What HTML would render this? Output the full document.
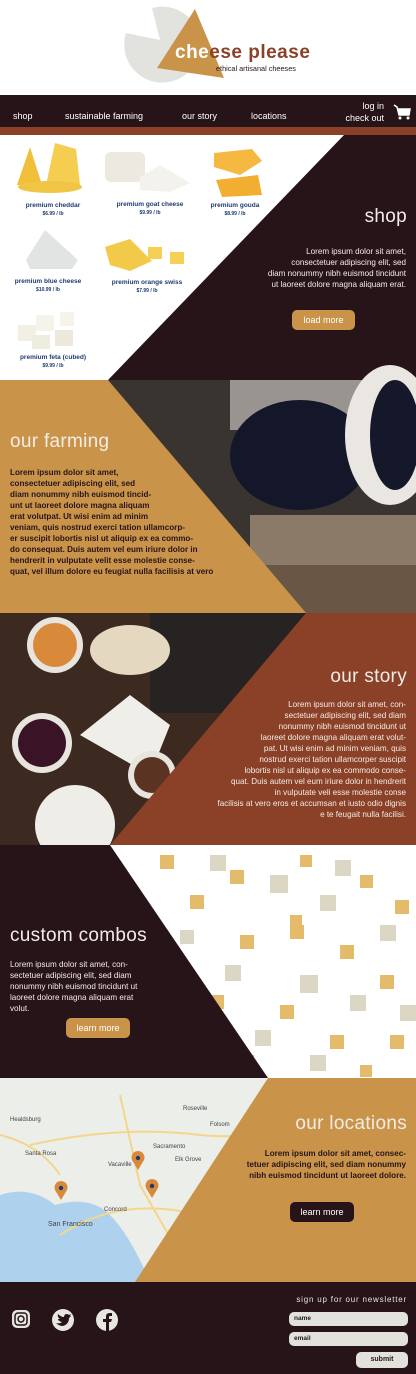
<!DOCTYPE html>
<html><head><meta charset="utf-8"><style>
*{margin:0;padding:0;box-sizing:border-box}
body{width:416px;height:1374px;position:relative;overflow:hidden;background:#fff;font-family:"Liberation Sans",sans-serif}
.a{position:absolute}
.t{position:absolute;font-size:8.1px;line-height:11px;font-weight:bold;white-space:nowrap}
.h{position:absolute;font-size:19px;font-weight:300;color:#f3ece6;letter-spacing:.3px}
.p{position:absolute;text-align:center;color:#1f3a73;font-size:6.5px;font-weight:bold;line-height:8px}
.p small{display:block;font-size:5px}
.btn{position:absolute;border-radius:5px;font-size:9px;text-align:center;line-height:20px}
</style></head><body>
<svg class="a" style="left:0;top:0" width="416" height="95">
<path d="M160 40 L126 33 A38 38 0 1 0 152 8 Z" fill="#e2e3de"/>
<polygon points="195,9 157,68 224,78" fill="#c9944a"/>
<text x="175" y="58" font-family="Liberation Sans" font-weight="bold" font-size="19" fill="#8a4128" letter-spacing=".5"><tspan fill="#fff">che</tspan>ese please</text>
<text x="216" y="71" font-family="Liberation Sans" font-size="7.3" fill="#261419">ethical artisanal cheeses</text>
</svg>
<div class="a" style="left:0;top:95px;width:416px;height:33px;background:#261419"></div>
<div class="a" style="left:0;top:127px;width:416px;height:8px;background:#8a4128"></div>
<div class="a" style="left:13px;top:111px;color:#fff;font-size:9px">shop</div>
<div class="a" style="left:65px;top:111px;color:#fff;font-size:9px">sustainable farming</div>
<div class="a" style="left:182px;top:111px;color:#fff;font-size:9px">our story</div>
<div class="a" style="left:251px;top:111px;color:#fff;font-size:9px">locations</div>
<div class="a" style="left:330px;top:100px;width:54px;text-align:right;color:#fff;font-size:9px;line-height:12px">log in<br>check out</div>
<svg class="a" style="left:393px;top:104px" width="18" height="18"><path d="M1 1 L4 3 L6 11 L16 11 L17 5 L5 5" fill="#fff" stroke="#fff" stroke-width="1.5"/><circle cx="7" cy="14" r="1.5" fill="#fff"/><circle cx="15" cy="14" r="1.5" fill="#fff"/></svg>
<svg class="a" style="left:0;top:135px" width="416" height="1147">
<polygon points="344,0 416,0 416,245 108,245" fill="#261419"/>
<rect x="0" y="245" width="416" height="233" fill="#3a3430"/>
<rect x="230" y="245" width="186" height="50" fill="#9a9490"/>
<ellipse cx="300" cy="320" rx="70" ry="55" fill="#14172a"/>
<ellipse cx="390" cy="300" rx="45" ry="70" fill="#eae6e2"/>
<ellipse cx="395" cy="300" rx="25" ry="55" fill="#15182a"/>
<rect x="250" y="380" width="166" height="60" fill="#8c7a68"/>
<rect x="260" y="430" width="156" height="48" fill="#6a5644"/>
<polygon points="0,245 108,245 306,478 0,478" fill="#c9944a"/>
<rect x="0" y="478" width="416" height="232" fill="#3c2a20"/>
<rect x="150" y="478" width="200" height="100" fill="#262322"/>
<circle cx="55" cy="510" r="28" fill="#e8e4de"/><circle cx="55" cy="510" r="22" fill="#d9893a"/>
<circle cx="42" cy="608" r="30" fill="#e8e4de"/><circle cx="42" cy="608" r="24" fill="#3a1426"/>
<polygon points="80,600 130,560 170,590 150,640" fill="#efeee8"/>
<circle cx="75" cy="690" r="40" fill="#efede8"/>
<circle cx="152" cy="640" r="24" fill="#e8e4de"/><circle cx="152" cy="640" r="18" fill="#5b3322"/>
<ellipse cx="130" cy="515" rx="40" ry="25" fill="#e4d8c0"/>
<polygon points="306,478 416,478 416,710 110,710" fill="#8a4128"/>
<rect x="0" y="710" width="416" height="233" fill="#fff"/>
<g fill="#e4bb6a">
<rect x="160" y="720" width="14" height="14"/><rect x="190" y="760" width="14" height="14"/><rect x="230" y="735" width="14" height="14"/><rect x="300" y="720" width="12" height="12"/><rect x="360" y="740" width="13" height="13"/><rect x="395" y="765" width="14" height="14"/><rect x="240" y="800" width="14" height="14"/><rect x="290" y="790" width="14" height="14"/><rect x="340" y="810" width="14" height="14"/><rect x="380" y="840" width="14" height="14"/><rect x="210" y="860" width="14" height="14"/><rect x="280" y="870" width="14" height="14"/><rect x="330" y="900" width="14" height="14"/><rect x="390" y="900" width="14" height="14"/><rect x="240" y="920" width="14" height="14"/><rect x="360" y="930" width="12" height="12"/><rect x="290" y="780" width="12" height="12"/>
</g>
<g fill="#dcd6c4">
<rect x="210" y="720" width="16" height="16"/><rect x="270" y="740" width="18" height="18"/><rect x="320" y="760" width="16" height="16"/><rect x="380" y="790" width="16" height="16"/><rect x="225" y="830" width="16" height="16"/><rect x="300" y="840" width="18" height="18"/><rect x="350" y="860" width="16" height="16"/><rect x="255" y="895" width="16" height="16"/><rect x="400" y="870" width="16" height="16"/><rect x="310" y="920" width="16" height="16"/><rect x="335" y="725" width="16" height="16"/><rect x="180" y="795" width="14" height="14"/>
</g>
<polygon points="0,710 110,710 268,943 0,943" fill="#261419"/>
<rect x="0" y="943" width="416" height="204" fill="#eceeea"/>
<path d="M0 1060 Q30 1050 55 1070 Q90 1060 110 1080 Q130 1100 150 1147 L0 1147 Z" fill="#aed1ee"/>
<path d="M0 1000 Q40 1010 60 1040" stroke="#f3d68c" stroke-width="2" fill="none"/>
<path d="M30 1010 Q120 990 200 1000 Q250 1005 290 990" stroke="#f3d68c" stroke-width="2" fill="none"/>
<path d="M120 960 L140 1050 L180 1120" stroke="#f3d68c" stroke-width="2" fill="none"/>
<path d="M60 1100 Q120 1060 200 1080" stroke="#f3d68c" stroke-width="2" fill="none"/>
<polygon points="268,943 416,943 416,1147 135,1147" fill="#c9944a"/>
</svg>
<svg class="a" style="left:0;top:1078px" width="270" height="204">
<g font-family="Liberation Sans" font-size="6" fill="#444"><text x="183" y="32">Roseville</text><text x="153" y="70">Sacramento</text><text x="10" y="43">Healdsburg</text><text x="25" y="77">Santa Rosa</text><text x="108" y="88">Vacaville</text><text x="175" y="83">Elk Grove</text><text x="104" y="133">Concord</text><text x="48" y="148" font-size="7">San Francisco</text><text x="210" y="48">Folsom</text></g>
<g fill="#d9893a"><path d="M138 92 L132 82 A6.5 6.5 0 1 1 144 82 Z"/><path d="M61 122 L55 112 A6.5 6.5 0 1 1 67 112 Z"/><path d="M152 120 L146 110 A6.5 6.5 0 1 1 158 110 Z"/></g>
<g fill="#1f3a73"><circle cx="138" cy="80" r="2.2"/><circle cx="61" cy="110" r="2.2"/><circle cx="152" cy="108" r="2.2"/></g>
</svg>
<svg class="a" style="left:0;top:135px" width="290" height="240">
<polygon points="17,50 30,12 42,50" fill="#f1c03b"/><polygon points="46,50 55,8 76,14 80,50" fill="#f5cd50"/><ellipse cx="50" cy="52" rx="32" ry="6" fill="#f0c545"/>
<rect x="105" y="17" width="40" height="30" rx="6" fill="#ece9e0"/><polygon points="140,42 160,30 190,48 170,57 140,55" fill="#f4f2ec"/>
<polygon points="214,18 252,14 262,26 240,40 214,32" fill="#f5b840"/><polygon points="216,45 258,40 262,60 222,62" fill="#f2ae30"/>
<polygon points="26,125 45,95 78,125 72,134 30,134" fill="#e0e4e2"/>
<polygon points="105,112 130,104 152,126 130,136 110,130" fill="#f3c94a"/><rect x="148" y="112" width="14" height="12" fill="#f6cf55"/><rect x="170" y="117" width="14" height="12" fill="#f6cf55"/>
<rect x="18" y="190" width="18" height="16" fill="#f2efe4"/><rect x="36" y="180" width="18" height="16" fill="#f6f4ea"/><rect x="55" y="195" width="18" height="16" fill="#ecE8dc"/><rect x="60" y="177" width="14" height="14" fill="#f6f4ea"/><rect x="32" y="200" width="18" height="14" fill="#efece0"/>
</svg>
<div class="p" style="left:8px;top:202px;width:90px">premium cheddar<small>$6.99 / lb</small></div>
<div class="p" style="left:105px;top:201px;width:90px">premium goat cheese<small>$9.99 / lb</small></div>
<div class="p" style="left:195px;top:202px;width:80px">premium gouda<small>$8.99 / lb</small></div>
<div class="p" style="left:4px;top:278px;width:88px">premium blue cheese<small>$10.99 / lb</small></div>
<div class="p" style="left:102px;top:279px;width:90px">premium orange swiss<small>$7.99 / lb</small></div>
<div class="p" style="left:8px;top:354px;width:90px">premium feta (cubed)<small>$9.99 / lb</small></div>
<div class="h" style="right:9px;top:206px">shop</div>
<div class="t" style="right:10px;top:246px;text-align:right;color:#f3ece6;font-weight:normal">Lorem ipsum dolor sit amet,<br>consectetuer adipiscing elit, sed<br>diam nonummy nibh euismod tincidunt<br>ut laoreet dolore magna aliquam erat.</div>
<div class="btn" style="left:292px;top:310px;width:63px;background:#c9944a;color:#fff">load more</div>
<div class="h" style="left:10px;top:431px">our farming</div>
<div class="t" style="left:10px;top:467px;color:#261419">Lorem ipsum dolor sit amet,<br>consectetuer adipiscing elit, sed<br>diam nonummy nibh euismod tincid-<br>unt ut laoreet dolore magna aliquam<br>erat volutpat. Ut wisi enim ad minim<br>veniam, quis nostrud exerci tation ullamcorp-<br>er suscipit lobortis nisl ut aliquip ex ea commo-<br>do consequat. Duis autem vel eum iriure dolor in<br>hendrerit in vulputate velit esse molestie conse-<br>quat, vel illum dolore eu feugiat nulla facilisis at vero</div>
<div class="h" style="right:9px;top:666px">our story</div>
<div class="t" style="right:10px;top:699px;text-align:right;color:#f3ece6;font-weight:normal">Lorem ipsum dolor sit amet, con-<br>sectetuer adipiscing elit, sed diam<br>nonummy nibh euismod tincidunt ut<br>laoreet dolore magna aliquam erat volut-<br>pat. Ut wisi enim ad minim veniam, quis<br>nostrud exerci tation ullamcorper suscipit<br>lobortis nisl ut aliquip ex ea commodo conse-<br>quat. Duis autem vel eum iriure dolor in hendrerit<br>in vulputate veli esse molestie conse<br>facilisis at vero eros et accumsan et iusto odio dignis<br>e te feugait nulla facilisi.</div>
<div class="h" style="left:10px;top:925px">custom combos</div>
<div class="t" style="left:10px;top:959px;color:#f3ece6;font-weight:normal">Lorem ipsum dolor sit amet, con-<br>sectetuer adipiscing elit, sed diam<br>nonummy nibh euismod tincidunt ut<br>laoreet dolore magna aliquam erat<br>volut.</div>
<div class="btn" style="left:66px;top:1018px;width:64px;background:#c9944a;color:#fff">learn more</div>
<div class="h" style="right:9px;top:1113px">our locations</div>
<div class="t" style="right:10px;top:1148px;text-align:right;color:#261419">Lorem ipsum dolor sit amet, consec-<br>tetuer adipiscing elit, sed diam nonummy<br>nibh euismod tincidunt ut laoreet dolore.</div>
<div class="btn" style="left:290px;top:1202px;width:64px;background:#261419;color:#fff">learn more</div>
<div class="a" style="left:0;top:1282px;width:416px;height:92px;background:#261419"></div>
<svg class="a" style="left:10px;top:1308px" width="112" height="24">
<rect x="2" y="2" width="18" height="18" rx="5" fill="#e8e6e0"/><rect x="5" y="5" width="12" height="12" rx="3" fill="none" stroke="#261419" stroke-width="1.5"/><circle cx="11" cy="11" r="3" fill="none" stroke="#261419" stroke-width="1.5"/>
<circle cx="53" cy="12" r="11" fill="#e8e6e0"/><path d="M46 15 Q50 16 52 14 Q48 13 48 11 Q49 11 50 11 Q47 9 48 6 Q51 9 54 9 Q54 6 57 6 Q58 6 59 7 L61 6 L60 8 L61 8 Q60 9 59 10 Q59 16 53 18 Q49 18 46 15Z" fill="#261419"/>
<circle cx="97" cy="12" r="11" fill="#e8e6e0"/><path d="M96 23 L96 14 L93 14 L93 11 L96 11 L96 8 Q96 5 100 5 L102 5 L102 8 L100 8 Q99 8 99 9 L99 11 L102 11 L101 14 L99 14 L99 23Z" fill="#261419"/>
</svg>
<div class="a" style="right:9px;top:1295px;color:#e8e6e0;font-size:8px;letter-spacing:.8px">sign up for our newsletter</div>
<div class="a" style="left:289px;top:1312px;width:119px;height:14px;border-radius:5px;background:#e2e2dc;font-size:6.5px;font-weight:bold;color:#261419;padding:3px 0 0 5px">name</div>
<div class="a" style="left:289px;top:1332px;width:119px;height:14px;border-radius:5px;background:#e2e2dc;font-size:6.5px;font-weight:bold;color:#261419;padding:3px 0 0 5px">email</div>
<div class="a" style="left:356px;top:1352px;width:52px;height:16px;border-radius:5px;background:#e2e2dc;font-size:7px;font-weight:bold;color:#261419;text-align:center;line-height:16px">submit</div>
</body></html>
